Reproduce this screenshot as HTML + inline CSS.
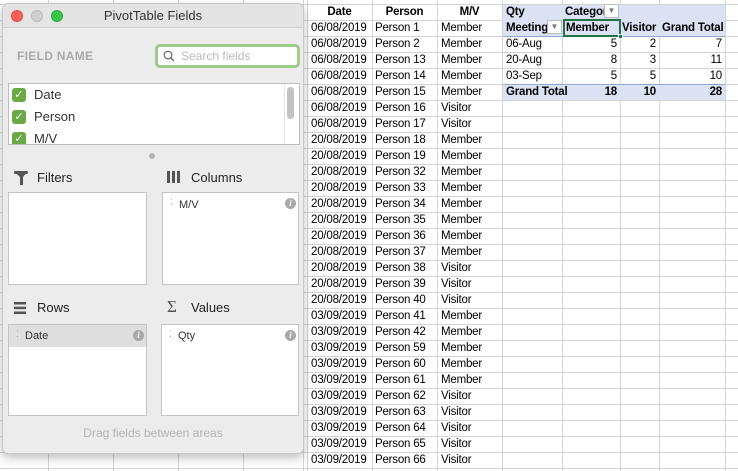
<!DOCTYPE html>
<html><head><meta charset="utf-8"><style>
*{margin:0;padding:0;box-sizing:border-box}
body{width:738px;height:471px;overflow:hidden;background:#fff;font-family:"Liberation Sans",sans-serif;position:relative}
.vl{position:absolute;top:0;height:471px;width:1px;background:#d4d4d4}
.hl{position:absolute;left:0;width:738px;height:1px;background:#d4d4d4}
.c{position:absolute;font-size:11.5px;letter-spacing:-0.2px;line-height:16px;height:16px;white-space:nowrap;color:#000}
.b{font-weight:bold}
.r{text-align:right}
.blue{position:absolute;background:#dae2f3}
.panel{position:absolute;left:2px;top:3px;width:302px;height:451px;background:#ececec;border:1px solid #c8c8c8;border-radius:6px;box-shadow:0 4px 10px rgba(0,0,0,.25);overflow:hidden}
.p{position:absolute}
.box{position:absolute;background:#fff;border:1px solid #c4c4c4}
.lbl{position:absolute;font-size:13px;color:#222}
.info{position:absolute;width:11px;height:11px;border-radius:50%;background:#a8a8a8;color:#fff;font-size:9px;font-weight:bold;font-style:italic;text-align:center;line-height:11px;font-family:"Liberation Serif",serif}
.chk{position:absolute;left:3px;width:14px;height:14px;border-radius:3px;background:#6aaa45;color:#fff;font-size:11px;text-align:center;line-height:14px}
.it{position:absolute;left:25px;font-size:13px;color:#333}
</style></head><body>
<div id="g"></div>
<script>
var h='';
[48,113,178,243,303,307,372,437,502,562,620,659,725].forEach(function(x){h+='<div class="vl" style="left:'+x+'px"></div>'});
for(var y=4;y<471;y+=16)h+='<div class="hl" style="top:'+y+'px"></div>';
document.getElementById('g').innerHTML=h;
</script>
<div class="blue" style="left:503px;top:5px;width:222px;height:31px"></div>
<div class="blue" style="left:503px;top:85px;width:222px;height:15px"></div>
<div style="position:absolute;left:503px;top:36px;width:222px;height:1px;background:#8eaadb"></div>
<div style="position:absolute;left:503px;top:84px;width:222px;height:1px;background:#8eaadb"></div>
<div id="t"></div>
<script>
var rows=[["06/08/2019","Person 1","Member"],["06/08/2019","Person 2","Member"],["06/08/2019","Person 13","Member"],["06/08/2019","Person 14","Member"],["06/08/2019","Person 15","Member"],["06/08/2019","Person 16","Visitor"],["06/08/2019","Person 17","Visitor"]];
[18,19,32,33,34,35,36,37].forEach(function(n){rows.push(["20/08/2019","Person "+n,"Member"])});
[38,39,40].forEach(function(n){rows.push(["20/08/2019","Person "+n,"Visitor"])});
[41,42,59,60,61].forEach(function(n){rows.push(["03/09/2019","Person "+n,"Member"])});
[62,63,64,65,66].forEach(function(n){rows.push(["03/09/2019","Person "+n,"Visitor"])});
var s='';
function c(x,y,w,t,cls){s+='<div class="c '+(cls||'')+'" style="left:'+x+'px;top:'+y+'px;width:'+w+'px">'+t+'</div>';}
s+='<div class="c b" style="left:307px;top:4px;width:65px;text-align:center">Date</div><div class="c b" style="left:372px;top:4px;width:65px;text-align:center">Person</div><div class="c b" style="left:437px;top:4px;width:65px;text-align:center">M/V</div>';
rows.forEach(function(r,i){var y=20+16*i;c(311,y,62,r[0]);c(375,y,62,r[1]);c(441,y,60,r[2]);});
c(506,4,50,'Qty','b');c(565,4,50,'Categor','b');
c(506,20,42,'Meeting','b" style="overflow:hidden');
s=s.replace('class="c b" style="overflow:hidden" style="','class="c b" style="overflow:hidden;');
c(566,20,50,'Member','b');c(622,20,40,'Visitor','b');c(662,20,62,'Grand Total','b');
var d=[["06-Aug",5,2,7],["20-Aug",8,3,11],["03-Sep",5,5,10]];
d.forEach(function(r,i){var y=36+16*i;c(506,y,50,r[0]);c(563,y,54,r[1],'r');c(620,y,36,r[2],'r');c(660,y,62,r[3],'r');});
c(506,84,60,'Grand Total','b');c(563,84,54,'18','b r');c(620,84,36,'10','b r');c(660,84,62,'28','b r');
document.getElementById('t').innerHTML=s;
</script>
<div style="position:absolute;left:604px;top:4px;width:15px;height:14px;background:#fff;border:1px solid #bbb;color:#777;font-size:8px;text-align:center;line-height:12px">▼</div>
<div style="position:absolute;left:547px;top:20px;width:15px;height:14px;background:#fff;border:1px solid #bbb;color:#777;font-size:8px;text-align:center;line-height:12px">▼</div>
<div style="position:absolute;left:563px;top:19px;width:58px;height:18px;border:2px solid #217346"></div>
<div style="position:absolute;left:618px;top:34px;width:5px;height:5px;background:#217346;border:1px solid #fff"></div>

<div class="panel">
 <div class="p" style="left:0;top:0;width:302px;height:24px;background:#e4e4e4;border-bottom:1px solid #d0d0d0"></div>
 <div class="p" style="left:8px;top:6px;width:12px;height:12px;border-radius:50%;background:#fc605c;border:1px solid #de4a45"></div>
 <div class="p" style="left:28px;top:6px;width:12px;height:12px;border-radius:50%;background:#d0d0d0;border:1px solid #bbb"></div>
 <div class="p" style="left:48px;top:6px;width:12px;height:12px;border-radius:50%;background:#34c84a;border:1px solid #2aa63c"></div>
 <div class="p" style="left:0;top:4px;width:300px;text-align:center;font-size:13px;color:#333">PivotTable Fields</div>
 <div class="p" style="left:14px;top:45px;font-size:12px;font-weight:bold;color:#aaa;letter-spacing:.3px">FIELD NAME</div>
 <div class="p" style="left:152px;top:40px;width:145px;height:24px;border:3px solid #9ccc8a;border-radius:5px;background:#fff"></div>
 <svg class="p" style="left:160px;top:46px" width="12" height="12"><circle cx="5" cy="5" r="3.8" fill="none" stroke="#666" stroke-width="1.2"/><line x1="8" y1="8" x2="11" y2="11" stroke="#666" stroke-width="1.3"/></svg>
 <div class="p" style="left:178px;top:45px;font-size:12px;color:#bbb">Search fields</div>
 <div class="box" style="left:5px;top:79px;width:292px;height:62px;overflow:hidden;border-color:#bdbdbd">
  <div class="chk" style="top:4px">✓</div><div class="it" style="top:3px">Date</div>
  <div class="chk" style="top:26px">✓</div><div class="it" style="top:25px">Person</div>
  <div class="chk" style="top:48px">✓</div><div class="it" style="top:47px">M/V</div>
  <div class="p" style="left:278px;top:3px;width:7px;height:32px;border-radius:4px;background:#c2c2c2"></div>
  <div class="p" style="left:275px;top:0;width:1px;height:62px;background:#e4e4e4"></div>
 </div>
 <div class="p" style="left:146px;top:149px;width:6px;height:6px;border-radius:50%;background:#b4b4b4"></div>
 <svg class="p" style="left:11px;top:166px" width="14" height="16"><path d="M1 2h12l-4 5v8h-3v-8z" fill="#555"/><rect x="0" y="1" width="14" height="3" rx="1.5" fill="#555"/></svg>
 <div class="lbl" style="left:34px;top:166px">Filters</div>
 <svg class="p" style="left:164px;top:167px" width="13" height="12"><rect x="0" y="0" width="3" height="12" fill="#555"/><rect x="5" y="0" width="3" height="12" fill="#555"/><rect x="10" y="0" width="3" height="12" fill="#555"/></svg>
 <div class="lbl" style="left:188px;top:166px">Columns</div>
 <div class="box" style="left:5px;top:188px;width:139px;height:93px"></div>
 <div class="box" style="left:159px;top:188px;width:137px;height:93px">
  <div class="p" style="left:7px;top:4px;font-size:9px;color:#999">⁚</div>
  <div class="p" style="left:16px;top:6px;font-size:11px;color:#333">M/V</div>
  <div class="info" style="left:122px;top:5px">i</div>
 </div>
 <svg class="p" style="left:11px;top:298px" width="12" height="12"><rect y="0" width="12" height="2.5" fill="#555"/><rect y="4.7" width="12" height="2.5" fill="#555"/><rect y="9.5" width="12" height="2.5" fill="#555"/></svg>
 <div class="lbl" style="left:34px;top:296px">Rows</div>
 <div class="p" style="left:164px;top:293px;font-size:17px;color:#555;font-family:'Liberation Serif',serif">Σ</div>
 <div class="lbl" style="left:188px;top:296px">Values</div>
 <div class="box" style="left:5px;top:320px;width:139px;height:92px">
  <div class="p" style="left:0;top:0;width:137px;height:22px;background:#dedede"></div>
  <div class="p" style="left:7px;top:4px;font-size:9px;color:#999">⁚</div>
  <div class="p" style="left:16px;top:5px;font-size:11px;color:#333">Date</div>
  <div class="info" style="left:124px;top:5px">i</div>
 </div>
 <div class="box" style="left:158px;top:320px;width:138px;height:92px">
  <div class="p" style="left:7px;top:4px;font-size:9px;color:#999">⁚</div>
  <div class="p" style="left:16px;top:5px;font-size:11px;color:#333">Qty</div>
  <div class="info" style="left:123px;top:5px">i</div>
 </div>
 <div class="p" style="left:0;top:422px;width:300px;text-align:center;font-size:12px;color:#b4b4b4">Drag fields between areas</div>
</div>
</body></html>
